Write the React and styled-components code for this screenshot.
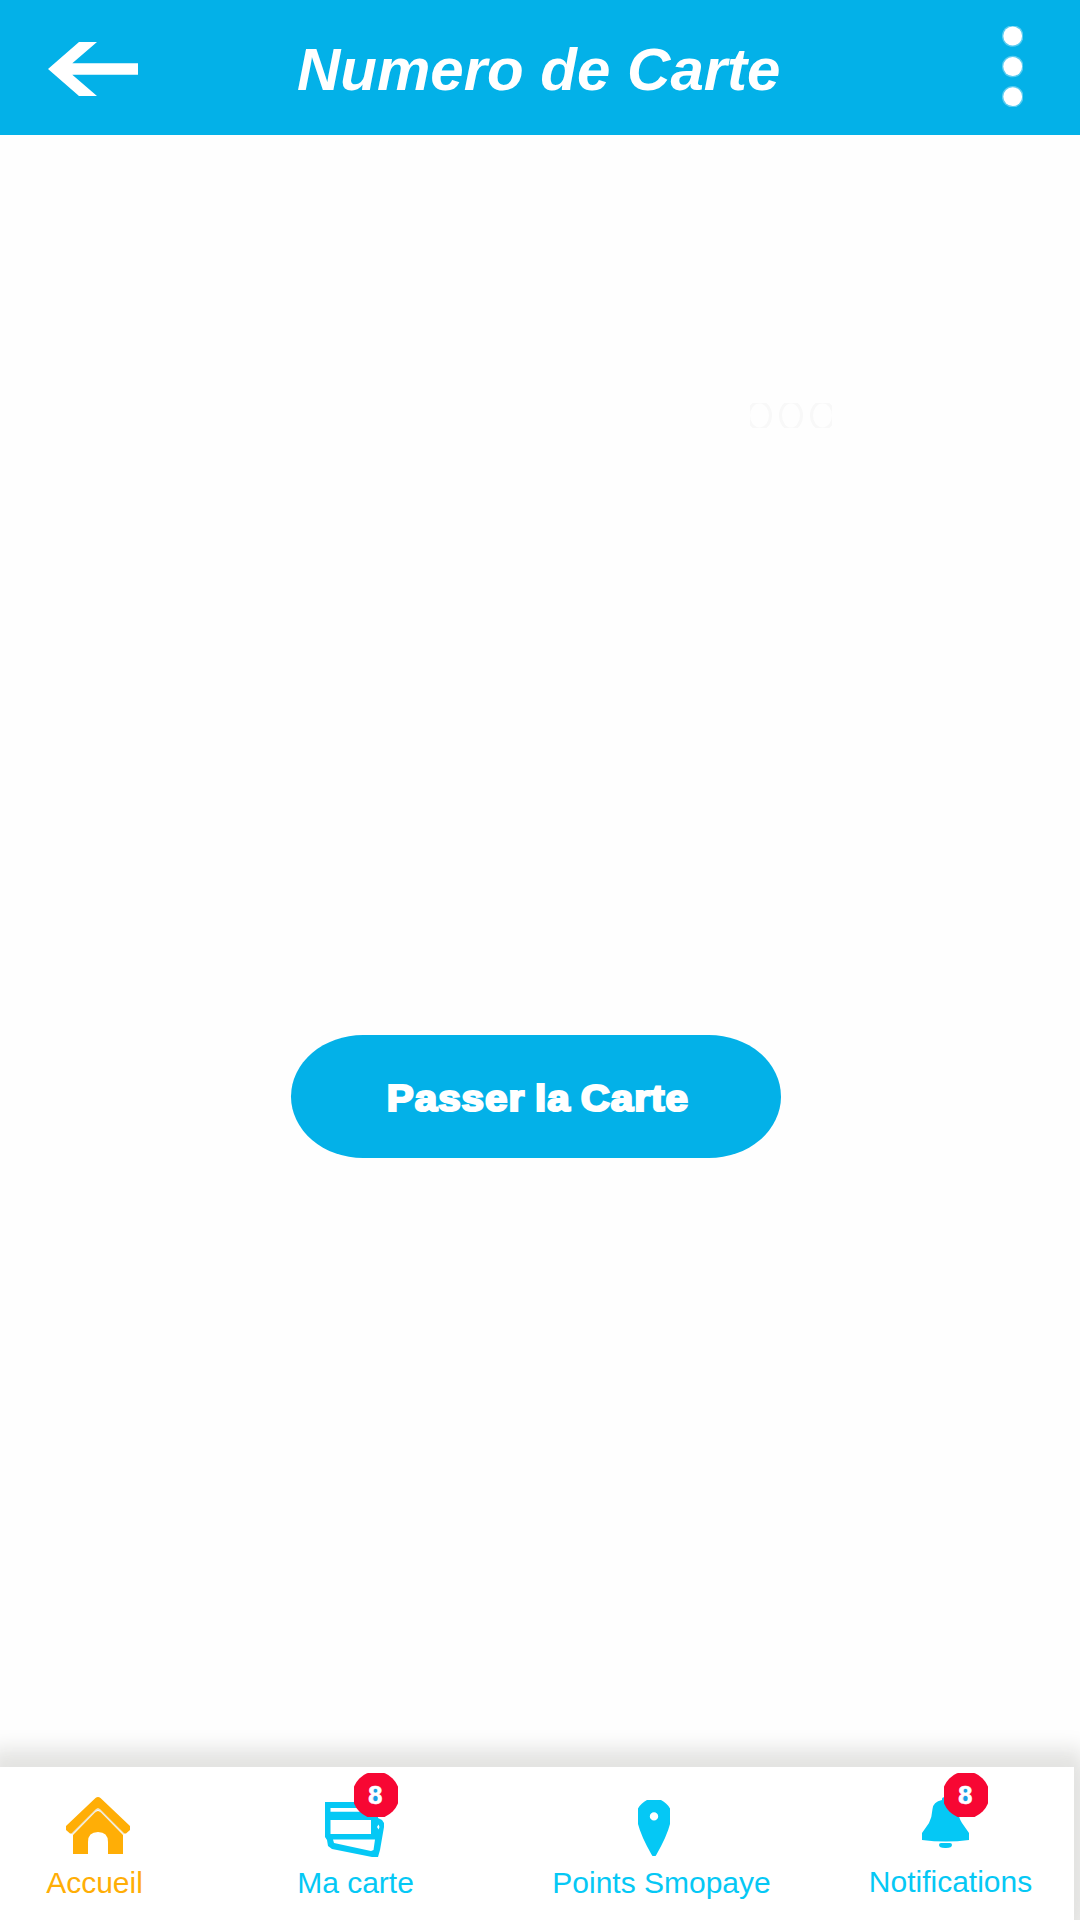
import React from "react";
import styled, { createGlobalStyle } from "styled-components";

const Global = createGlobalStyle`
  * { box-sizing: border-box; }
  body { margin: 0; background: #fefefe; font-family: "Liberation Sans", Arial, sans-serif; }
`;

const Screen = styled.div`
  width: 1080px;
  height: 1920px;
  display: flex;
  flex-direction: column;
  overflow: hidden;
  background: #fefefe;
`;

const Header = styled.header`
  height: 135px;
  flex: none;
  display: flex;
  align-items: center;
  padding: 0 57px 0 48px;
  background: #03b1e8;
`;

const Title = styled.h1`
  margin: 5px auto 0 159px;
  font-size: 60px;
  line-height: 72px;
  font-weight: 700;
  font-style: italic;
  color: #fff;
  white-space: nowrap;
`;

const IconButton = styled.button`
  display: flex;
  padding: 0;
  border: 0;
  background: none;
`;

const BackButton = styled(IconButton)`
  margin-top: 3px;
`;

const MoreButton = styled(IconButton)`
  margin-bottom: 2px;
`;

const Main = styled.main`
  flex: 1;
  display: flex;
  flex-direction: column;
  align-items: center;
  padding-top: 268px;
`;

const Loader = styled.svg`
  display: block;
  flex: none;
  margin-left: 502px;
`;

const PrimaryButton = styled.button`
  width: 490px;
  height: 123px;
  margin: 607px 8px 0 0;
  padding: 4px 0 0 4px;
  display: flex;
  align-items: center;
  justify-content: center;
  border: 0;
  border-radius: 72px / 61.5px;
  background: #03b1e8;
`;

const ButtonText = styled.span`
  font: 700 36px/42px "Liberation Sans", Arial, sans-serif;
  letter-spacing: 0.9px;
  word-spacing: -2px;
  color: #fff;
  -webkit-text-stroke: 2.2px #fff;
  white-space: nowrap;
  transform: scaleX(1.12);
`;

const NavBar = styled.nav`
  width: 1074px;
  height: 153px;
  flex: none;
  display: flex;
  padding-left: 47px;
  background: #fff;
  box-shadow: 0 -8px 20px 10px #e3e3e1, 0 14px 20px 10px #e3e3e1;
`;

const NavItem = styled.a`
  position: relative;
  flex: none;
  width: ${(p) => p.$width}px;
  margin-right: ${(p) => p.$gap}px;
  display: flex;
  flex-direction: column;
  align-items: center;
  color: ${(p) => (p.$active ? "#ffae06" : "#05c8f5")};
`;

const IconSlot = styled.span`
  height: ${(p) => p.$height}px;
  display: flex;
  align-items: flex-start;
  padding-top: ${(p) => p.$top}px;
  margin-left: ${(p) => p.$shift}px;
`;

const Label = styled.span`
  font-size: 30px;
  line-height: 36px;
  white-space: nowrap;
`;

const BadgeBox = styled.span`
  position: absolute;
  top: 6px;
  left: ${(p) => p.$left}px;
  width: 44px;
  height: 44px;
`;

const BadgeShape = styled.svg`
  position: absolute;
  inset: 0;
`;

const BadgeCount = styled.span`
  position: absolute;
  inset: 0;
  text-align: center;
  padding-right: 1.5px;
  font-size: 25.5px;
  font-weight: 700;
  line-height: 44px;
  color: #fff;
  -webkit-text-stroke: 0.6px #fff;
`;

const BackArrow = () => (
  <svg width="90" height="54" viewBox="0 0 90 54" fill="#fff">
    <path d="M0 27 31 0H49L24.3 21.3H90V32.7H24.3L49 54H31Z" />
  </svg>
);

const Dots = () => (
  <svg width="21" height="81" viewBox="0 0 21 81" fill="#fff">
    {[10, 40.5, 70.7].map((y) => (
      <g key={y}>
        <circle cx="10.7" cy={y} r="10.8" opacity="0.35" />
        <circle cx="10.7" cy={y} r="9.4" />
      </g>
    ))}
  </svg>
);

const Home = () => (
  <svg width="64" height="57" viewBox="0 0 64 57" fill="currentColor">
    <path d="M29.5 1Q32-1 34.5 1L64 29V33L60 36.5H57.5L34.5 12.8Q32 10 29.5 12.8L6 36.5H4L0 33V29Z" />
    <path d="M7 57V38L29 15.5Q32 12.5 35 15.5L57 38V57H42V45Q42 35 32 35Q22 35 22 45V57Z" />
    <path d="M6 37 30 13.3Q32 11.3 34 13.3L58 37" fill="none" stroke="#eee6cf" strokeWidth="1.3" />
  </svg>
);

const Cards = () => (
  <svg width="59" height="55" viewBox="0 0 59 55" fill="currentColor" fillRule="evenodd">
    <path d="M0 0H53V16L57 18L59 21V25L55 48L53 55H47L7 47L3 44L2 38L0 35ZM5.5 6V9.7H40V6ZM5.5 18V32H46V18ZM8 37.5 9 41 46 49 48.5 48 50 37.5ZM52 25 53.5 27.5 54.5 25 53.5 22.5Z" />
  </svg>
);

const Pin = () => (
  <svg width="32" height="56" viewBox="0 0 32 56" fill="currentColor" fillRule="evenodd">
    <path d="M9 0H23Q29 3 32 8.5V24Q29 36 18.5 54.5L17.5 56H14.5L13.5 54.5Q3 36 0 24V8.5Q3 3 9 0ZM16 12.2A4.2 4.2 0 1 0 16 20.6A4.2 4.2 0 1 0 16 12.2Z" />
  </svg>
);

const Bell = () => (
  <svg width="47" height="51" viewBox="0 0 47 51" fill="currentColor">
    <path d="M20 2Q20 0 23.5 0T27 2V3Q36 5 36.5 12Q36 20 40 26L47 36V43Q24 46 0 43V36L7 26Q10 20 10.5 12Q11 5 20 3Z" />
    <path d="M19 46H28Q30 46 30 48Q30 51 24 51H23Q17 51 17 48Q17 46 19 46Z" />
  </svg>
);

const Badge = ({ count, left }) => (
  <BadgeBox $left={left}>
    <BadgeShape width="44" height="44" viewBox="0 0 44 44">
      <circle cx="22" cy="22" r="23.5" fill="#f70733" />
      <path d="M18.5 15H24V20H18.5ZM18.5 23H24V28.5H18.5Z" fill="#1b9fe6" />
    </BadgeShape>
    <BadgeCount>{count}</BadgeCount>
  </BadgeBox>
);

const items = [
  { label: "Accueil", icon: <Home />, width: 95, gap: 157, top: 30, shift: 6, height: 98, active: true },
  { label: "Ma carte", icon: <Cards />, width: 113, gap: 141, top: 35, shift: -2, height: 98, badge: 8, left: 55 },
  { label: "Points Smopaye", icon: <Pin />, width: 217, gap: 100, top: 33, shift: -15, height: 98 },
  { label: "Notifications", icon: <Bell />, width: 161, gap: 0, top: 30, shift: -10, height: 97, badge: 8, left: 74 },
];

export default function App() {
  return (
    <Screen>
      <Global />
      <Header>
        <BackButton aria-label="Retour"><BackArrow /></BackButton>
        <Title>Numero de Carte</Title>
        <MoreButton aria-label="Menu"><Dots /></MoreButton>
      </Header>
      <Main>
        <Loader width="82" height="25" viewBox="0 0 82 25" fill="none" stroke="#f8f8f8" strokeWidth="3">
          <ellipse cx="9.5" cy="12.5" rx="11" ry="13.5" />
          <ellipse cx="41" cy="12.5" rx="10.5" ry="13.5" />
          <ellipse cx="72.5" cy="12.5" rx="11" ry="13.5" />
        </Loader>
        <PrimaryButton><ButtonText>Passer la Carte</ButtonText></PrimaryButton>
      </Main>
      <NavBar>
        {items.map((it) => (
          <NavItem key={it.label} $width={it.width} $gap={it.gap} $active={it.active}>
            <IconSlot $top={it.top} $shift={it.shift} $height={it.height}>{it.icon}</IconSlot>
            <Label>{it.label}</Label>
            {it.badge && <Badge count={it.badge} left={it.left} />}
          </NavItem>
        ))}
      </NavBar>
    </Screen>
  );
}
